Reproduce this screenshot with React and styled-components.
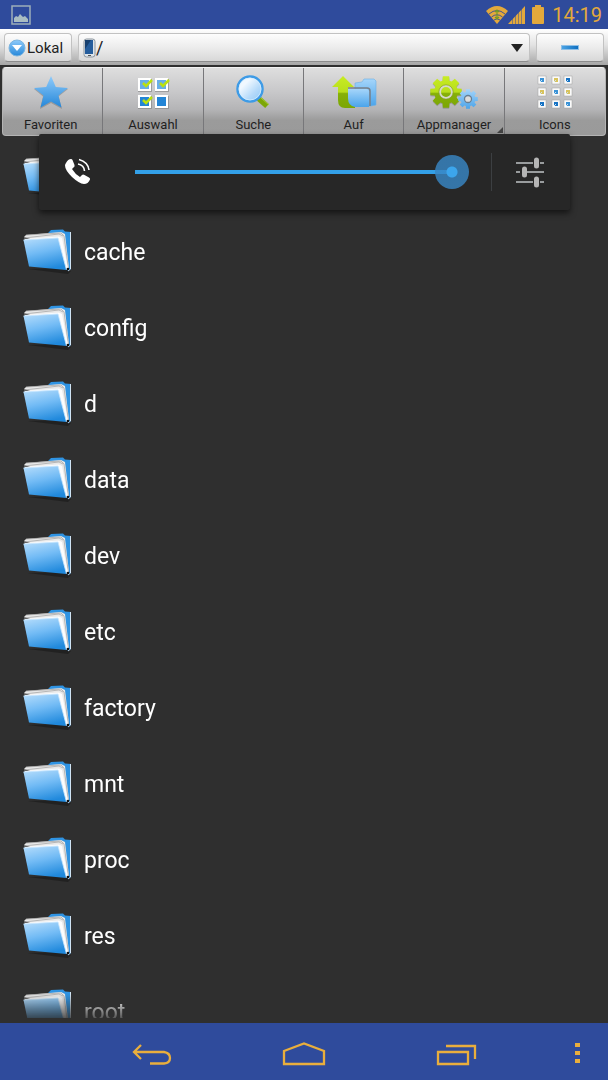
import React, { useState } from "react";
import styled, { createGlobalStyle } from "styled-components";

const GlobalStyle = createGlobalStyle`
  * {
    box-sizing: border-box;
  }

  body {
    margin: 0;
    background: #2f2f2f;
    font-family: Roboto, "Noto Sans", sans-serif;
  }

  button,
  select,
  input {
    font-family: inherit;
    margin: 0;
  }
`;

const Screen = styled.div`
  position: relative;
  display: flex;
  flex-direction: column;
  height: 100vh;
  overflow: hidden;
  background: #2f2f2f;
`;

const StatusBar = styled.header`
  flex: none;
  display: flex;
  align-items: center;
  justify-content: space-between;
  height: 29px;
  padding: 0 6px 0 11px;
  background: #2f4b9c;
  color: #e3a93c;
`;

const StatusIcons = styled.div`
  display: flex;
  align-items: center;
`;

const Clock = styled.time`
  margin-left: 4px;
  font-size: 20px;
  line-height: 28px;
`;

const AddressBar = styled.div`
  flex: none;
  display: flex;
  gap: 6px;
  height: 36px;
  padding: 4px 4px 3px;
  background: linear-gradient(#ffffff, #e2e2e2 45%, #a6a6a6);
`;

const boxLook = `
  display: flex;
  align-items: center;
  height: 29px;
  border: 1px solid #c2c2c2;
  border-bottom-color: #8c8c8c;
  border-radius: 4px;
  background: linear-gradient(#fdfdfd, #ececec 50%, #d8d8d8);
  color: #222;
`;

const PlaceButton = styled.button`
  ${boxLook}
  gap: 1px;
  width: 68px;
  padding: 0 3px;
  font-size: 15px;
`;

const PathField = styled.label`
  ${boxLook}
  flex: 1;
  min-width: 0;
  padding: 0 6px 0 4px;
`;

const PathSelect = styled.select`
  flex: 1;
  min-width: 0;
  padding: 0;
  border: 0;
  outline: 0;
  appearance: none;
  background: transparent;
  color: #222;
  font-size: 18px;
`;

const CollapseButton = styled.button`
  ${boxLook}
  justify-content: center;
  width: 68px;
  padding: 0;
`;

const Dash = styled.span`
  width: 18px;
  height: 5px;
  border: 1px solid #8fbfe6;
  background: linear-gradient(90deg, #4aa3e4, #0f6fc0);
`;

const Toolbar = styled.nav`
  flex: none;
  display: grid;
  grid-template-columns: repeat(6, minmax(0, 1fr));
  height: 69px;
  margin: 2px 2px 0;
  border: 1px solid #b4b4b4;
  border-top-color: #f2f2f2;
  border-radius: 4px;
  background: linear-gradient(#dedede, #c8c8ca 35%, #b4b4b6 62%, #9b9b9b 78%, #9a9a9a);
  overflow: hidden;
`;

const Tool = styled.button`
  position: relative;
  display: flex;
  flex-direction: column;
  align-items: center;
  justify-content: space-between;
  padding: 6px 0 2px;
  border: 0;
  border-right: 1px solid #77777a;
  background: transparent;
  color: #1f1f1f;
  font-size: 13px;
  line-height: 16px;

  &:first-child {
    padding-right: 4px;
  }

  &:last-child {
    border-right: 0;
  }
`;

const Corner = styled.span`
  position: absolute;
  right: 1px;
  bottom: 2px;
  border: 3px solid transparent;
  border-right-color: #444;
  border-bottom-color: #444;
`;

const FileList = styled.ul`
  flex: 1;
  min-height: 0;
  margin: 2px 0 5px;
  padding: 0;
  list-style: none;
  overflow-y: auto;
  scrollbar-width: none;
  mask-image: linear-gradient(#000 calc(100% - 24px), rgba(0, 0, 0, 0.2));
`;

const FileRow = styled.li`
  display: flex;
  align-items: center;
  gap: 12px;
  height: 76px;
  padding: 0 22px;
  color: #fff;
  font-size: 23px;
  line-height: 28px;
`;

const FileName = styled.span`
  padding-top: 2px;
`;

const VolumePanel = styled.section`
  position: absolute;
  top: 134px;
  left: 39px;
  right: 38px;
  display: flex;
  align-items: center;
  height: 76px;
  padding: 0 24px 0 25px;
  border-radius: 2px;
  background: #272727;
  box-shadow: 0 3px 6px rgba(0, 0, 0, 0.6);
`;

const VolumeSlider = styled.input`
  flex: 1;
  min-width: 0;
  height: 34px;
  margin: 0 22px 0 43px;
  appearance: none;
  outline: 0;
  background: transparent;

  &::-webkit-slider-runnable-track {
    height: 34px;
    background: linear-gradient(#33a0e8, #33a0e8) left center / calc(100% - 17px) 4px no-repeat;
  }

  &::-webkit-slider-thumb {
    appearance: none;
    width: 34px;
    height: 34px;
    border-radius: 50%;
    background: radial-gradient(circle, #3ca5ec 5px, rgba(56, 134, 196, 0.82) 6px);
  }
`;

const Divider = styled.span`
  width: 1px;
  height: 38px;
  margin-right: 22px;
  background: #3c3f42;
`;

const IconButton = styled.button`
  display: flex;
  padding: 0;
  border: 0;
  background: transparent;
`;

const NavBar = styled.nav`
  flex: none;
  display: flex;
  align-items: center;
  justify-content: center;
  gap: 104px;
  position: relative;
  height: 57px;
  background: #2f4b9c;
`;

const MenuButton = styled(IconButton)`
  position: absolute;
  right: 24px;
`;

const HiddenDefs = styled.svg`
  position: absolute;
  width: 0;
  height: 0;
`;

function Gradients() {
  return (
    <HiddenDefs aria-hidden="true">
      <defs>
        <linearGradient id="blue" x1="0" y1="0" x2="0" y2="1">
          <stop offset="0" stopColor="#8fcbfb" />
          <stop offset="1" stopColor="#2587d9" />
        </linearGradient>
        <linearGradient id="paleBlue" x1="0" y1="0" x2="0" y2="1">
          <stop offset="0" stopColor="#a5d5fa" />
          <stop offset="1" stopColor="#4ba4ea" />
        </linearGradient>
        <linearGradient id="face" x1="0.2" y1="0" x2="0.5" y2="1">
          <stop offset="0" stopColor="#b0dafb" />
          <stop offset="0.45" stopColor="#72bbf5" />
          <stop offset="1" stopColor="#2089dc" />
        </linearGradient>
        <linearGradient id="green" x1="0" y1="0" x2="0" y2="1">
          <stop offset="0" stopColor="#c8ec22" />
          <stop offset="0.5" stopColor="#b8de1c" />
          <stop offset="0.55" stopColor="#86b008" />
          <stop offset="1" stopColor="#7ba604" />
        </linearGradient>
        <linearGradient id="glass" x1="0" y1="0" x2="1" y2="1">
          <stop offset="0.3" stopColor="#f0f8ff" />
          <stop offset="0.65" stopColor="#b5dafa" />
          <stop offset="1" stopColor="#8cc5f5" />
        </linearGradient>
      </defs>
    </HiddenDefs>
  );
}

const FolderIcon = () => (
  <svg width="50" height="48" viewBox="0 0 50 48">
    <path d="M6 41L46 46L49 43L40 40Z" fill="#1b1b1b" opacity="0.7" />
    <path d="M26 5L29 2L41 1.5L43 3.5L49 4V41L46 43L38 30Z" fill="#2f93e2" />
    <path d="M48.5 4V41L46 43" fill="none" stroke="#cfe3f3" strokeWidth="1" />
    <path d="M2 9L4 7L39 4L43 6L47 40L45 42L36 20Z" fill="#e9e9e9" />
    <path d="M2 10L37 6L41 8M4 7L39 5L42 8L46.500 41" fill="none" stroke="#a8a8a8" strokeWidth="0.8" />
    <path d="M2 11L37 8.500L40 10L46 41L40 40Z" fill="#fdfdfd" />
    <path d="M1.500 12L36 10L44.500 42L7 38.500Z" fill="url(#face)" />
    <path d="M1.500 12L36 10L44.500 42" fill="none" stroke="#c6e6ff" strokeWidth="0.8" />
    <circle cx="46" cy="41" r="1.300" fill="#111" />
  </svg>
);

const StarIcon = () => (
  <svg width="36" height="36" viewBox="0 0 36 36">
    <path d="M18 4L22.500 14L35 15L25.500 22.500L29 35L18 29L7 35L10 22.500L1 15L13.500 14Z" fill="#777" opacity="0.5" />
    <path d="M18 2L22.800 13L35 14L25.500 21.500L28.500 33.500L18 27.500L7.500 33.500L10.500 21.500L1 14L13.200 13Z" fill="url(#blue)" />
  </svg>
);

function CheckIcon() {
  const boxes = [[3, 4], [20, 4], [3, 21], [20, 21]];
  return (
    <svg width="36" height="36" viewBox="0 0 36 36">
      {boxes.map(([x, y], i) => (
        <g key={i}>
          <rect x={x} y={y + 1} width="14" height="13" fill="#808080" opacity="0.6" />
          <rect x={x} y={y} width="13" height="13" fill="#fff" />
          <rect x={x + 2} y={y + 2} width="9" height="9" fill={y > 10 ? "#2385d6" : "#68aee8"} />
          {i < 3 && (
            <path d={`M${x + 5} ${y + 5}L${x + 8} ${y + 8}L${x + 14} ${y + 2}`} fill="none" stroke="#bbe010" strokeWidth="2.600" />
          )}
        </g>
      ))}
    </svg>
  );
}

const SearchIcon = () => (
  <svg width="36" height="36" viewBox="0 0 36 36">
    <path d="M23 24L32 32" stroke="#7da707" strokeWidth="5.500" />
    <path d="M25 23L34 31" stroke="#a9ca3e" strokeWidth="1" />
    <circle cx="15" cy="15" r="12.500" fill="url(#glass)" stroke="#3e9be6" strokeWidth="2.500" />
    <circle cx="15" cy="15" r="11" fill="none" stroke="#d8edfc" strokeWidth="0.800" />
  </svg>
);

const UpIcon = () => (
  <svg width="46" height="36" viewBox="0 0 46 36">
    <path d="M24 9L31 8L33 5H43L45 7V31L40 32H24Z" fill="url(#paleBlue)" stroke="#6bb0e6" strokeWidth="0.600" />
    <path d="M17 14H36Q39 14 39 17V32" fill="none" stroke="#777f88" strokeWidth="1.500" />
    <path d="M17 15H35Q38 15 38 18V33H17Z" fill="url(#paleBlue)" />
    <path d="M12 2L23 13H17V24Q17 32 24 33V34H14Q7 34 7 26V13H1Z" fill="url(#green)" />
  </svg>
);

// closed outline of a cog with eight teeth
function gearPath(cx, cy, r) {
  const points = [];
  for (let i = 0; i < 8; i++) {
    [[-0.3, 0.74], [-0.2, 1], [0.2, 1], [0.3, 0.74]].forEach(([offset, k]) => {
      const a = (i * Math.PI) / 4 + offset;
      points.push(`${cx + Math.sin(a) * r * k} ${cy - Math.cos(a) * r * k}`);
    });
  }
  return `M${points.join("L")}Z`;
}

const GearsIcon = () => (
  <svg width="50" height="36" viewBox="0 0 50 36">
    <path d={gearPath(17, 19, 16)} fill="#777" opacity="0.5" />
    <path d={gearPath(17, 18, 16)} fill="url(#green)" />
    <circle cx="17" cy="18" r="6" fill="none" stroke="#d5d9cb" strokeWidth="2" />
    <circle cx="17" cy="18" r="7.200" fill="none" stroke="#809730" strokeWidth="0.600" />
    <path d={gearPath(39, 25, 10)} fill="url(#paleBlue)" />
    <circle cx="39" cy="25" r="3.500" fill="#ddd" stroke="#687e92" strokeWidth="1.300" />
  </svg>
);

function GridIcon() {
  const colours = ["#3a92d6", "#d8c35c", "#1773c4", "#d8c35c", "#3a92d6", "#d8c35c", "#1773c4", "#1773c4", "#3a92d6"];
  return (
    <svg width="36" height="36" viewBox="0 0 36 36">
      {colours.map((c, i) => {
        const x = [1, 15, 27][i % 3];
        const y = 2 + Math.floor(i / 3) * 12;
        return (
          <g key={i}>
            <rect x={x} y={y} width="8" height="8" fill="#fafafa" stroke="#a0a0a0" strokeWidth="0.500" />
            <rect x={x + 2} y={y + 2} width="4" height="4" fill={c} />
            <path d={`M${x + 2} ${y + 6}l2 -2`} stroke="#cfe4f4" strokeWidth="1" />
          </g>
        );
      })}
    </svg>
  );
}

const tools = [
  { label: "Favoriten", Icon: StarIcon },
  { label: "Auswahl", Icon: CheckIcon },
  { label: "Suche", Icon: SearchIcon },
  { label: "Auf", Icon: UpIcon },
  { label: "Appmanager", Icon: GearsIcon, more: true },
  { label: "Icons", Icon: GridIcon },
];

const folders = ["", "cache", "config", "d", "data", "dev", "etc", "factory", "mnt", "proc", "res", "root"];

export default function App() {
  const [volume, setVolume] = useState(100);

  return (
    <Screen>
      <GlobalStyle />
      <Gradients />
      <StatusBar>
        <svg width="20" height="20" viewBox="0 0 20 20">
          <rect x="1" y="1" width="18" height="18" fill="none" stroke="#9dafb9" strokeWidth="1.500" />
          <path d="M3 17V13L5 11L7 12L9 9L12 12L14 11L17 14V17Z" fill="#a9bcc2" />
        </svg>
        <StatusIcons>
          <svg width="22" height="20" viewBox="0 0 22 20">
            <path d="M0 6Q11 -4 22 6L11 19Z" fill="#e3a93c" />
            <path d="M3 9Q11 2 19 9M5.500 12Q11 7.500 16.500 12M8 15Q11 12.500 14 15" fill="none" stroke="#2f4b9c" strokeWidth="0.900" />
            <path d="M11 5V14M9 7L11 5L13 7M9 12L11 14L13 12" fill="none" stroke="#6f9a25" strokeWidth="1.200" />
          </svg>
          <svg width="18" height="20" viewBox="0 0 18 20">
            <path d="M0 19L17 1V19Z" fill="#e3a93c" />
            <path d="M4.500 12V20M7.500 9V20M10.500 6V20M13.500 3V20" stroke="#2f4b9c" strokeWidth="0.500" />
          </svg>
          <svg width="22" height="20" viewBox="0 0 22 20">
            <path d="M9 2V0H15V2H17Q18 2 18 3V18Q18 19 17 19H7Q6 19 6 18V3Q6 2 7 2Z" fill="#e3a93c" />
          </svg>
          <Clock>14:19</Clock>
        </StatusIcons>
      </StatusBar>

      <AddressBar>
        <PlaceButton type="button">
          <svg width="18" height="18" viewBox="0 0 18 18">
            <circle cx="9" cy="9" r="8" fill="url(#blue)" stroke="#7db5df" />
            <path d="M4 6H14L9 12Z" fill="#fff" />
          </svg>
          Lokal
        </PlaceButton>
        <PathField>
          <svg width="13" height="20" viewBox="0 0 13 20">
            <rect x="1" y="1" width="11" height="18" rx="2.500" fill="#dfe5ea" stroke="#8d969e" />
            <rect x="2" y="2" width="8" height="14" fill="#255d9c" />
            <path d="M2 2H8L2 11Z" fill="#17406f" />
            <path d="M5 17.500H8" stroke="#555" />
          </svg>
          <PathSelect aria-label="Pfad">
            <option>/</option>
          </PathSelect>
          <svg width="12" height="8" viewBox="0 0 12 8">
            <path d="M0 0H12L6 8Z" fill="#222" />
          </svg>
        </PathField>
        <CollapseButton type="button" aria-label="Minimieren">
          <Dash />
        </CollapseButton>
      </AddressBar>

      <Toolbar>
        {tools.map(({ label, Icon, more }) => (
          <Tool key={label} type="button">
            <Icon />
            {label}
            {more && <Corner />}
          </Tool>
        ))}
      </Toolbar>

      <FileList>
        {folders.map((name, i) => (
          <FileRow key={i}>
            <FolderIcon />
            <FileName>{name}</FileName>
          </FileRow>
        ))}
      </FileList>

      <VolumePanel>
        <svg width="28" height="28" viewBox="0 0 28 28">
          <path d="M2 5Q4 1 7 1Q8 1 8.500 2L10.500 7Q11 8.500 9.500 9.500L8 11Q11 16 16 19L18 17Q19 16 20.500 17L25 19.500Q26.500 20.500 26 21.500Q24 26 20 26Q15 25.500 8 19Q1 12 1 7.500Q1 6 2 5Z" fill="#fff" />
          <path d="M14 6Q20 7 20.500 13M15 1.500Q24 4 25 12" fill="none" stroke="#fff" strokeWidth="1.600" />
        </svg>
        <VolumeSlider
          type="range"
          min="0"
          max="100"
          value={volume}
          aria-label="Lautstärke"
          onChange={(e) => setVolume(Number(e.target.value))}
        />
        <Divider />
        <IconButton type="button" aria-label="Einstellungen">
          <svg width="32" height="32" viewBox="0 0 32 32">
            <path d="M2 7H19M26 7H30M2 16H6M13 16H30M2 26H19M26 26H30" stroke="#999c9e" strokeWidth="2" />
            <path d="M22.500 4V10M10.500 13V19M22.500 23V29" stroke="#b5b5b5" strokeWidth="5" strokeLinecap="round" />
          </svg>
        </IconButton>
      </VolumePanel>

      <NavBar>
        <IconButton type="button" aria-label="Zurück">
          <svg width="50" height="30" viewBox="0 0 50 30">
            <path d="M14 8L7 15L14 22M7 15H37Q43 16 43 21Q43 26 37 26.500H23" fill="none" stroke="#e9ae3d" strokeWidth="2.300" />
          </svg>
        </IconButton>
        <IconButton type="button" aria-label="Startseite">
          <svg width="46" height="30" viewBox="0 0 46 30">
            <path d="M3 14L23 6.500L43 14V27H3Z" fill="none" stroke="#e9ae3d" strokeWidth="2.300" />
          </svg>
        </IconButton>
        <IconButton type="button" aria-label="Letzte Apps">
          <svg width="50" height="30" viewBox="0 0 50 30">
            <path d="M7 15H37V27H7ZM15 9H44V22" fill="none" stroke="#e9ae3d" strokeWidth="2.300" />
          </svg>
        </IconButton>
        <MenuButton type="button" aria-label="Menü">
          <svg width="14" height="24" viewBox="0 0 14 24">
            <path d="M5 3H10V7H5ZM5 11H10V15H5ZM5 19H10V23H5Z" fill="#e9ae3d" />
          </svg>
        </MenuButton>
      </NavBar>
    </Screen>
  );
}
